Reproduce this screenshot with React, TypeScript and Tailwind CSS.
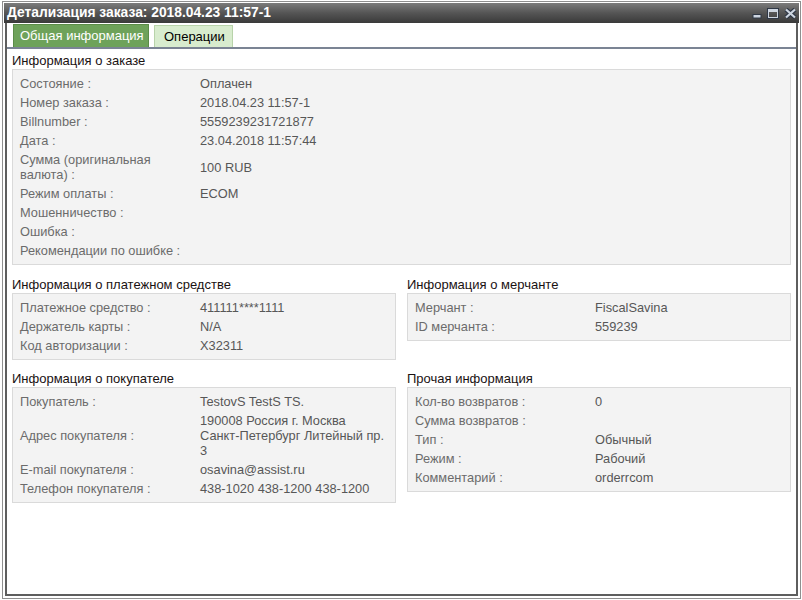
import React from "react";

type Row = { label: string; value?: React.ReactNode };

const orderRows: Row[] = [
    { label: "Состояние :", value: "Оплачен" },
    { label: "Номер заказа :", value: "2018.04.23 11:57-1" },
    { label: "Billnumber :", value: "5559239231721877" },
    { label: "Дата :", value: "23.04.2018 11:57:44" },
    { label: "Сумма (оригинальная валюта) :", value: "100 RUB" },
    { label: "Режим оплаты :", value: "ECOM" },
    { label: "Мошенничество :" },
    { label: "Ошибка :" },
    { label: "Рекомендации по ошибке :" },
];

const paymentRows: Row[] = [
    { label: "Платежное средство :", value: "411111****1111" },
    { label: "Держатель карты :", value: "N/A" },
    { label: "Код авторизации :", value: "X32311" },
];

const merchantRows: Row[] = [
    { label: "Мерчант :", value: "FiscalSavina" },
    { label: "ID мерчанта :", value: "559239" },
];

const buyerRows: Row[] = [
    { label: "Покупатель :", value: "TestovS TestS TS." },
    {
        label: "Адрес покупателя :",
        value: (
            <>
                190008 Россия г. Москва <span className="whitespace-nowrap">Санкт-Петербург</span> Литейный пр. 3
            </>
        ),
    },
    { label: "E-mail покупателя :", value: "osavina@assist.ru" },
    { label: "Телефон покупателя :", value: "438-1020 438-1200 438-1200" },
];

const otherRows: Row[] = [
    { label: "Кол-во возвратов :", value: "0" },
    { label: "Сумма возвратов :" },
    { label: "Тип :", value: "Обычный" },
    { label: "Режим :", value: "Рабочий" },
    { label: "Комментарий :", value: "orderrcom" },
];

function Section({ title, rows, valueWidth }: { title: string; rows: Row[]; valueWidth?: string }) {
    return (
        <div className="flex flex-col">
            <div className="h-[16px] leading-[16px] text-[13px] text-[#1a1212]">{title}</div>
            <div className="border border-[#dadada] bg-[#f3f3f3] pl-[7px] pr-2 py-[4px]">
                {rows.map((row, i) => (
                    <div key={i} className="flex items-center py-[2px] text-[12.8px] leading-[15px]">
                        <div className="w-[180px] shrink-0 text-[#6b6b6b] pr-4">{row.label}</div>
                        <div className={"text-[#575757] " + (valueWidth ?? "")}>{row.value}</div>
                    </div>
                ))}
            </div>
        </div>
    );
}

export default function App() {
    return (
        <div className="w-[802px] h-[600px] bg-white pl-[2px] pt-px font-['Liberation_Sans',Arial,sans-serif] overflow-hidden">
            <div className="w-[799px] h-[598px] border border-[#8f8f8f] bg-white p-px flex flex-col">
                <div className="h-[20px] shrink-0 bg-gradient-to-b from-[#7c7c7c] via-[#555555] to-[#3a3a3a] flex items-center justify-between pl-[3px] pr-[2px]">
                    <div className="text-white font-bold text-[13.8px] leading-none">Детализация заказа: 2018.04.23 11:57-1</div>
                    <div className="flex items-center gap-[5px] mt-[1px]">
                        <svg width="10" height="11" viewBox="0 0 10 11">
                            <rect x="1" y="6.5" width="8" height="3.5" fill="#cdd5e0" stroke="#2f3846" />
                        </svg>
                        <svg width="12" height="11" viewBox="0 0 12 11">
                            <rect x="1" y="1" width="10" height="9" fill="none" stroke="#2f3846" strokeWidth="2" />
                            <rect x="1.5" y="1.5" width="9" height="8" fill="none" stroke="#cdd5e0" strokeWidth="1" />
                            <rect x="2" y="2" width="8" height="2" fill="#cdd5e0" />
                        </svg>
                        <svg width="13" height="11" viewBox="0 0 13 11">
                            <path d="M2 1.5 L11 9.5 M11 1.5 L2 9.5" stroke="#2f3846" strokeWidth="4.5" />
                            <path d="M2 1.5 L11 9.5 M11 1.5 L2 9.5" stroke="#cdd5e0" strokeWidth="2.2" />
                        </svg>
                    </div>
                </div>
                <div className="flex-1 border-2 border-[#5e5e5e] border-t-0 bg-white flex flex-col mx-px mb-px">
                    <div className="h-[26px] shrink-0 flex items-end gap-[5px] pl-[6px] border-b-2 border-[#7b8494]">
                        <div className="w-[136px] h-[23px] bg-[#6ea25a] border border-[#5b8c48] border-b-0 text-white text-[13px] leading-[22px] pl-[6px]">Общая информация</div>
                        <div className="w-[79px] h-[22px] bg-[#d8ecce] border border-[#b8d3aa] border-b-0 text-black text-[13px] leading-[21px] pl-[9px]">Операции</div>
                    </div>
                    <div className="px-[5px] pt-[4px] flex flex-col">
                        <Section title="Информация о заказе" rows={orderRows} valueWidth="w-[160px]" />
                        <div className="grid grid-cols-2 gap-x-[11px] mt-[12px] items-start">
                            <Section title="Информация о платежном средстве" rows={paymentRows} />
                            <Section title="Информация о мерчанте" rows={merchantRows} />
                        </div>
                        <div className="grid grid-cols-2 gap-x-[11px] mt-[11px] items-start">
                            <Section title="Информация о покупателе" rows={buyerRows} valueWidth="w-[190px]" />
                            <Section title="Прочая информация" rows={otherRows} />
                        </div>
                    </div>
                </div>
            </div>
        </div>
    );
}
